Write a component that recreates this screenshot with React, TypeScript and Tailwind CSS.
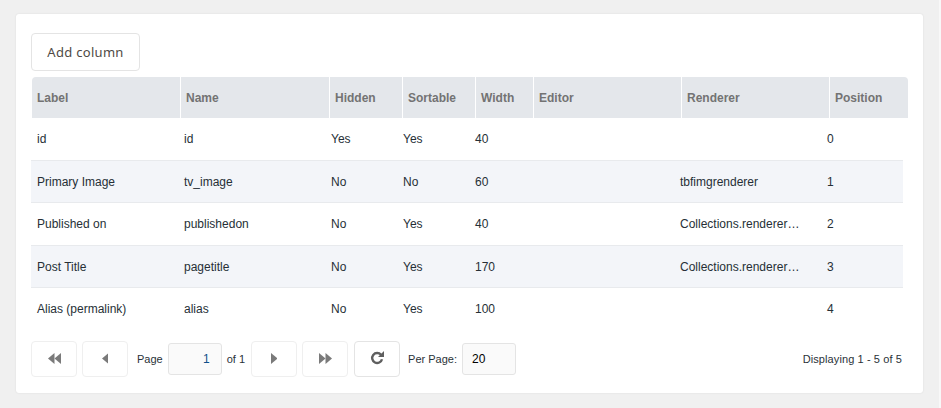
import React from "react";

const sans = "font-['Liberation_Sans',Arial,sans-serif]";

const cols = [
  { w: "w-[149px]", h: "Label" },
  { w: "w-[149px]", h: "Name" },
  { w: "w-[73px]", h: "Hidden" },
  { w: "w-[73px]", h: "Sortable" },
  { w: "w-[58px]", h: "Width" },
  { w: "w-[148px]", h: "Editor" },
  { w: "w-[148px]", h: "Renderer" },
  { w: "w-[78px]", h: "Position" },
];

const rows = [
  ["id", "id", "Yes", "Yes", "40", "", "", "0"],
  ["Primary Image", "tv_image", "No", "No", "60", "", "tbfimgrenderer", "1"],
  ["Published on", "publishedon", "No", "Yes", "40", "", "Collections.renderer…", "2"],
  ["Post Title", "pagetitle", "No", "Yes", "170", "", "Collections.renderer…", "3"],
  ["Alias (permalink)", "alias", "No", "Yes", "100", "", "", "4"],
];

const rowH = ["h-[43px]", "h-[42px]", "h-[43px]", "h-[42px]", "h-[42px]"];

function Tri({ dir, double }: { dir: "l" | "r"; double?: boolean }) {
  const one = dir === "l" ? "M6.5 0v11L0 5.5z" : "M0 0v11l6.5-5.5z";
  return (
    <svg className="mb-[2px]" width={double ? 13 : 6.5} height="11" viewBox={double ? "0 0 13 11" : "0 0 6.5 11"} fill="#7a7a7a">
      <path d={one} />
      {double && <path d={one} transform="translate(6.5 0)" />}
    </svg>
  );
}

function PageBtn({ children, dark }: { children: React.ReactNode; dark?: boolean }) {
  return (
    <button className={`w-[46px] h-[36px] rounded-[4px] border bg-white flex items-center justify-center ${dark ? "border-[#e4e4e4]" : "border-[#efefef]"}`}>
      {children}
    </button>
  );
}

export default function App() {
  return (
    <div className={`w-[941px] h-[408px] bg-[#f0f0f0] border-r-2 border-[#f8f8f8] pt-[14px] pl-[16px] overflow-hidden ${sans}`}>
      <div className="w-[907px] h-[379px] bg-white rounded-[3px] shadow-[0_0_2px_rgba(0,0,0,0.1)] pt-[19px] pl-[15px] flex flex-col">
        <button className="w-[109px] h-[38px] rounded-[4px] border border-[#e4e4e4] bg-white text-[13px] leading-none text-[#4f4a45] font-['Noto_Sans',sans-serif] tracking-[0.3px] flex items-center justify-center">
          Add column
        </button>

        <div className="mt-[6px] ml-px w-[876px] h-[41px] bg-[#e4e7eb] rounded-t-[4px] flex overflow-hidden">
          {cols.map((c, i) => (
            <div
              key={c.h}
              className={`${c.w} shrink-0 h-full flex items-center pl-[5px] text-[12px] font-bold text-[#737373] ${i < cols.length - 1 ? "border-r border-white" : "grow"}`}
            >
              {c.h}
            </div>
          ))}
        </div>

        <div className="w-[872px]">
          {rows.map((r, i) => (
            <div
              key={r[0]}
              className={`${rowH[i]} flex items-center text-[12px] text-[#262f36] ${i % 2 === 1 ? "bg-[#f3f5f9]" : "bg-white"} ${i < 4 ? "border-b border-[#e8eaed]" : ""}`}
            >
              <div className="w-[150px] shrink-0 pl-[6px]">{r[0]}</div>
              <div className="w-[147px] shrink-0 pl-[3px]">{r[1]}</div>
              <div className="w-[72px] shrink-0 pl-[3px]">{r[2]}</div>
              <div className="w-[72px] shrink-0 pl-[3px]">{r[3]}</div>
              <div className="w-[58px] shrink-0 pl-[3px]">{r[4]}</div>
              <div className="w-[147px] shrink-0" />
              <div className="w-[147px] shrink-0 pl-[3px] whitespace-nowrap">{r[6]}</div>
              <div className="pl-[3px]">{r[7]}</div>
            </div>
          ))}
        </div>

        <div className="mt-[11px] w-[871px] flex items-center text-[11px] text-[#2a3238]">
          <PageBtn><Tri dir="l" double /></PageBtn>
          <div className="ml-[5px]"><PageBtn><Tri dir="l" /></PageBtn></div>
          <span className="ml-[9px]">Page</span>
          <input
            readOnly
            value="1"
            className="ml-[5px] w-[54px] h-[32px] rounded-[3px] border border-[#e4e4e4] bg-[#fafafa] text-right pr-[11px] text-[12px] text-[#0f4f8a] outline-none"
          />
          <span className="ml-[5px]">of 1</span>
          <div className="ml-[6px]"><PageBtn><Tri dir="r" /></PageBtn></div>
          <div className="ml-[5px]"><PageBtn><Tri dir="r" double /></PageBtn></div>
          <div className="ml-[6px]">
            <PageBtn dark>
              <svg className="mb-[2px] mr-px" width="14" height="14" viewBox="0 0 14 14" fill="none">
                <path d="M11 3.8A5 5 0 1 0 12 8.2" stroke="#5f5f5f" strokeWidth="2.4" />
                <path d="M8 6h6V0z" fill="#5f5f5f" />
              </svg>
            </PageBtn>
          </div>
          <span className="ml-[8px]">Per Page:</span>
          <input
            readOnly
            value="20"
            className="ml-[5px] w-[54px] h-[32px] rounded-[3px] border border-[#e4e4e4] bg-[#fafafa] pl-[9px] text-[12px] text-black outline-none"
          />
          <span className="ml-auto tracking-[0.1px]">Displaying 1 - 5 of 5</span>
        </div>
      </div>
    </div>
  );
}
